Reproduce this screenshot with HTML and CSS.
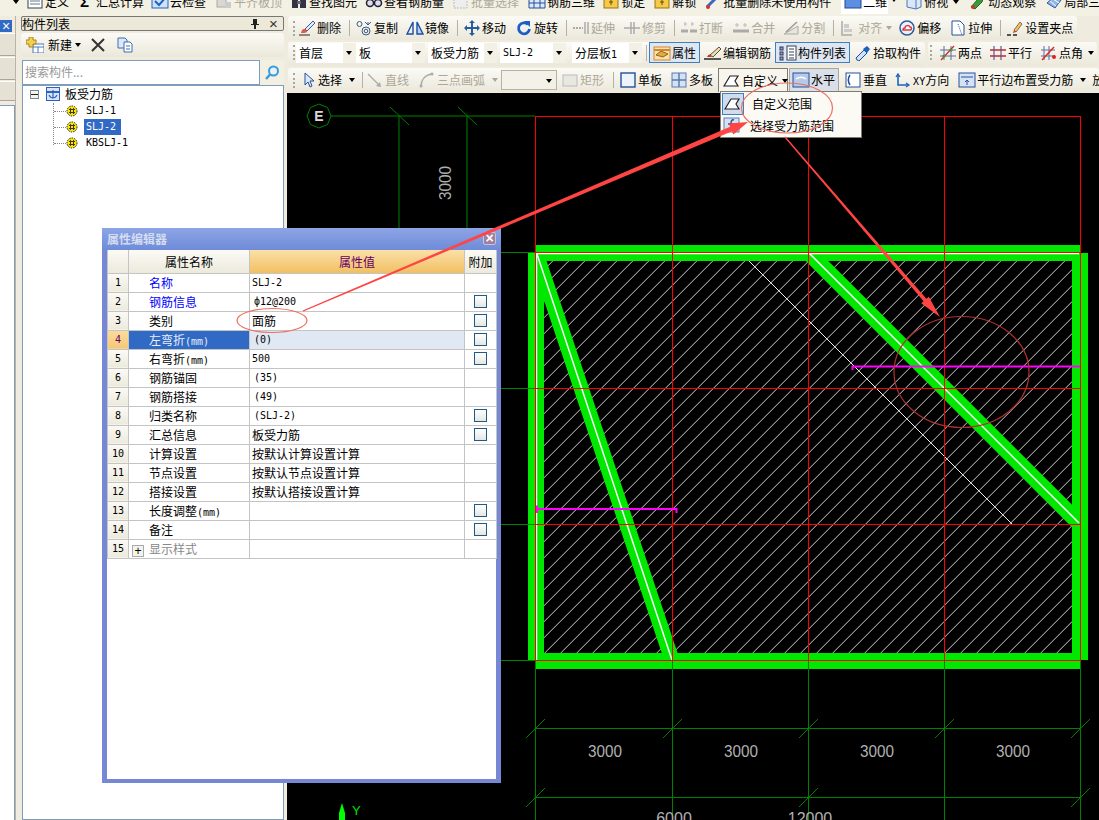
FILE: index.html
```html
<!DOCTYPE html>
<html lang="zh">
<head>
<meta charset="utf-8">
<title>属性编辑器</title>
<link rel="stylesheet" href="styles.css">
</head>
<body>
<svg class="sprite" aria-hidden="true">
  <symbol id="i-def" viewBox="0 0 18 16"><rect x="2" y="1" width="14" height="13" fill="#fff" stroke="#345"/><rect x="2" y="1" width="14" height="3" fill="#4a78c8"/><path d="M4 7h10M4 10h10" stroke="#678"/></symbol>
  <symbol id="i-cloud" viewBox="0 0 18 16"><rect x="1" y="3" width="16" height="11" fill="#cfe2fa" stroke="#1d62c0"/><path d="M4 7l4 4 7-8" fill="none" stroke="#1d62c0" stroke-width="2"/></symbol>
  <symbol id="i-flat" viewBox="0 0 18 16"><rect x="2" y="3" width="9" height="10" fill="#d8d8d0" stroke="#aaa"/><rect x="10" y="8" width="6" height="6" fill="#ccc"/></symbol>
  <symbol id="i-find" viewBox="0 0 18 16"><rect x="2" y="6" width="6" height="8" fill="#334" /><rect x="10" y="6" width="6" height="8" fill="#334"/><rect x="7" y="7" width="4" height="3" fill="#667"/></symbol>
  <symbol id="i-glass" viewBox="0 0 18 16"><circle cx="5" cy="9" r="3.5" fill="#dde" stroke="#223" stroke-width="1.5"/><circle cx="13" cy="9" r="3.5" fill="#dde" stroke="#223" stroke-width="1.5"/></symbol>
  <symbol id="i-batch" viewBox="0 0 18 16"><rect x="2" y="2" width="13" height="12" fill="#eee" stroke="#bbb" stroke-dasharray="2 1"/></symbol>
  <symbol id="i-3d" viewBox="0 0 18 16"><path d="M1 4h16v10H1zM6 4v10M12 4v10M1 9h16" fill="#dfe8f8" stroke="#24509c"/></symbol>
  <symbol id="i-lock" viewBox="0 0 18 16"><rect x="2" y="3" width="14" height="11" fill="#f5c94a" stroke="#9a7414"/><path d="M9 6v5M7 8h4" stroke="#6a4a00"/></symbol>
  <symbol id="i-wand" viewBox="0 0 18 16"><path d="M3 13 13 3" stroke="#3c68c0" stroke-width="3"/><circle cx="4" cy="13" r="2" fill="#c33"/><circle cx="14" cy="2" r="1.5" fill="#eb5"/></symbol>
  <symbol id="i-plane" viewBox="0 0 18 16"><rect x="1" y="2" width="16" height="12" fill="#5d8fe0" stroke="#1d4a96"/></symbol>
  <symbol id="i-top" viewBox="0 0 18 16"><path d="M2 5 11 2l5 3v8l-5 2-9-2z" fill="#dbe7f7" stroke="#4a78b8"/><path d="M11 2v13" stroke="#4a78b8"/></symbol>
  <symbol id="i-orbit" viewBox="0 0 18 16"><path d="M2 13 9 5l6-3-2 6-7 7z" fill="#3c9a3c" stroke="#1f6a1f"/><circle cx="4" cy="13" r="2" fill="#c33"/></symbol>
  <symbol id="i-part" viewBox="0 0 18 16"><path d="M2 9 9 3l7 3-6 8z" fill="#8fb4e8" stroke="#2f5a9c"/><path d="M5 7l6 5M8 5l6 4" stroke="#fff"/></symbol>
  <symbol id="i-del" viewBox="0 0 18 16"><path d="M1 15h11" stroke="#222"/><path d="M7 9 15 1l2 2-8 8z" fill="#e4ebf8" stroke="#3c5a98"/><path d="M3 13c1-4 2-4 4-4l2 2c0 2-3 2-6 2z" fill="#e05a3c"/></symbol>
  <symbol id="i-copy" viewBox="0 0 18 16"><circle cx="4.500" cy="4" r="2.500" fill="none" stroke="#3c5a88"/><circle cx="11" cy="11" r="4" fill="none" stroke="#3c5a88"/><circle cx="11" cy="11" r="1.800" fill="none" stroke="#3c5a88"/><path d="M10 2l3 3 3-3M13 5V2" fill="none" stroke="#3c5a88"/></symbol>
  <symbol id="i-mirror" viewBox="0 0 18 16"><path d="M1 14 7 2v12z" fill="none" stroke="#1a4fa0" stroke-width="1.400"/><path d="M17 14 11 2v12z" fill="#bcd2f2" stroke="#1a4fa0" stroke-width="1.400"/></symbol>
  <symbol id="i-move" viewBox="0 0 18 16"><path d="M9 0l3 3h-2v4h4V5l3 3-3 3V9h-4v4h2l-3 3-3-3h2V9H4v2L1 8l3-3v2h4V3H6z" fill="#2a5c9c"/></symbol>
  <symbol id="i-rotate" viewBox="0 0 18 16"><path d="M13 4.500A5.500 5.500 0 1 0 14.500 9" fill="none" stroke="#1c5ec8" stroke-width="2.800"/><path d="M9 1h6v6z" fill="#1c5ec8"/></symbol>
  <symbol id="i-extend" viewBox="0 0 18 16"><path d="M1 8h10" stroke="#aaa" stroke-dasharray="2 1" stroke-width="2"/><path d="M13 2v12M16 2v12" stroke="#aaa" stroke-width="1.500"/></symbol>
  <symbol id="i-trim" viewBox="0 0 18 16"><path d="M1 8h16" stroke="#bbb" stroke-width="2"/><path d="M8 2v12M11 2v12" stroke="#aaa" stroke-width="1.500"/></symbol>
  <symbol id="i-break" viewBox="0 0 18 16"><path d="M1 11h7M10 11h7" stroke="#aaa" stroke-width="3"/><path d="M4 4h3M11 4h3M5 2v4M12 2v4" stroke="#bbb"/></symbol>
  <symbol id="i-merge" viewBox="0 0 18 16"><path d="M1 11h16" stroke="#aaa" stroke-width="3"/><path d="M3 5h4M11 5h4M5 3v4M13 3v4" stroke="#bbb"/></symbol>
  <symbol id="i-split" viewBox="0 0 18 16"><path d="M2 14h14V6z" fill="#e6e6de" stroke="#aaa"/><path d="M4 12 15 2" stroke="#999" stroke-width="1.500"/></symbol>
  <symbol id="i-align" viewBox="0 0 18 16"><path d="M3 1v14h10" fill="none" stroke="#aaa" stroke-width="1.500"/><rect x="5" y="4" width="5" height="4" fill="#ccc"/><rect x="5" y="9" width="8" height="3" fill="#ccc"/></symbol>
  <symbol id="i-offset" viewBox="0 0 18 16"><circle cx="9" cy="8" r="7" fill="#eef" stroke="#2a5c9c" stroke-width="1.500"/><path d="M5 10c0-2 1-2 2-2 0-3 4-3 5-1 2 0 2 3 0 3z" fill="#fff" stroke="#d43c3c" stroke-width="1.500"/></symbol>
  <symbol id="i-stretch" viewBox="0 0 18 16"><path d="M3 1h8l4 4v10H3z" fill="#fff" stroke="#24509c"/><path d="M9 4l4 11" stroke="#24509c" stroke-dasharray="1 1"/></symbol>
  <symbol id="i-grip" viewBox="0 0 18 16"><path d="M8 10 14 2l2 2-6 8z" fill="#f0c84a" stroke="#866"/><path d="M8 10l-1 3 3-1" fill="#d33"/><path d="M1 15h4M7 15h4" stroke="#222" stroke-width="1.500"/></symbol>
  <symbol id="i-prop" viewBox="0 0 18 16"><rect x="1" y="2" width="16" height="13" fill="#fbe2ac" stroke="#d8862c"/><path d="M3 10l5-4 7 3-5 3z" fill="#e8a83c" stroke="#8a6a20"/><path d="M1 5h16" stroke="#d8862c" stroke-width="2"/></symbol>
  <symbol id="i-edit" viewBox="0 0 18 16"><path d="M6 10 15 2l2 2-8 8z" fill="#f2d9a6" stroke="#554"/><path d="M0 14h17" stroke="#222" stroke-width="1.500"/><path d="M3 12c1-2 2-3 3-2l2 2z" fill="#c33"/></symbol>
  <symbol id="i-list" viewBox="0 0 18 16"><rect x="1" y="2" width="3" height="3" fill="#8fa8d0" stroke="#335"/><rect x="1" y="7" width="3" height="3" fill="#8fa8d0" stroke="#335"/><rect x="1" y="12" width="3" height="3" fill="#8fa8d0" stroke="#335"/><rect x="8" y="1" width="9" height="14" fill="#fff" stroke="#345"/><path d="M10 4h5M10 7h5M10 10h5M10 13h5" stroke="#345"/></symbol>
  <symbol id="i-pick" viewBox="0 0 18 16"><path d="M3 15l-1-2 8-8 3 3-8 8z" fill="#cfe2fa" stroke="#1d4a96"/><path d="M9 4l4-3 3 3-3 4z" fill="#1d62c0"/></symbol>
  <symbol id="i-two" viewBox="0 0 18 16"><path d="M5 1v14M12 1v14M1 5h16M1 11h16" stroke="#5a6ea0"/><path d="M2 15 15 1" stroke="#e02020" stroke-width="1.300"/><circle cx="5" cy="11" r="1.600" fill="#3a9a3a"/><circle cx="12" cy="5" r="1.600" fill="#3a9a3a"/></symbol>
  <symbol id="i-para" viewBox="0 0 18 16"><path d="M5 1v14M12 1v14" stroke="#5a6ea0" stroke-width="1.300"/><path d="M1 5h16M1 11h16" stroke="#c02838" stroke-width="1.300"/></symbol>
  <symbol id="i-angle" viewBox="0 0 18 16"><path d="M4 1v14M9 1v14M1 5h14M1 11h14" stroke="#5a6ea0"/><path d="M2 15 14 2" stroke="#e02020" stroke-width="1.300"/><circle cx="14" cy="12" r="2" fill="#e02020"/></symbol>
  <symbol id="i-arrow" viewBox="0 0 18 16"><path d="M6 1v12l3-3 2 5 2-1-2-5h4z" fill="#dfe8f8" stroke="#24509c"/></symbol>
  <symbol id="i-line" viewBox="0 0 18 16"><path d="M2 2 14 14" stroke="#aaa" stroke-width="1.300"/><path d="M15 15l-5-1 4-4z" fill="#aaa"/></symbol>
  <symbol id="i-arc" viewBox="0 0 18 16"><path d="M3 15C3 8 7 3 14 2" fill="none" stroke="#aaa" stroke-width="1.500"/><circle cx="3" cy="14" r="1.500" fill="#aaa"/><circle cx="14" cy="2" r="1.500" fill="#aaa"/></symbol>
  <symbol id="i-rect" viewBox="0 0 18 16"><rect x="2" y="3" width="14" height="11" fill="#e8e8e0" stroke="#bbb"/></symbol>
  <symbol id="i-single" viewBox="0 0 18 16"><rect x="2" y="1" width="14" height="14" fill="#eef3fb" stroke="#24509c" stroke-width="1.400"/></symbol>
  <symbol id="i-multi" viewBox="0 0 18 16"><rect x="2" y="1" width="14" height="14" fill="#d6e2f4" stroke="#5a7cb0"/><path d="M9 1v14M2 8h14" stroke="#5a7cb0" stroke-width="1.500"/></symbol>
  <symbol id="i-custom" viewBox="0 0 18 16"><path d="M2 13 8 3h8l-3 5 3 5z" fill="#fff" stroke="#222" stroke-width="1.200"/></symbol>
  <symbol id="i-horiz" viewBox="0 0 18 16"><rect x="1" y="1" width="16" height="14" fill="#b5c9e8" stroke="#24509c"/><path d="M4 7c3-2 7-2 10 0" fill="none" stroke="#fff" stroke-width="1.500"/></symbol>
  <symbol id="i-vert" viewBox="0 0 18 16"><rect x="2" y="1" width="14" height="14" fill="#fff" stroke="#24509c"/><path d="M6 3c-2 3-2 7 0 10" fill="none" stroke="#24509c" stroke-width="1.500"/></symbol>
  <symbol id="i-xy" viewBox="0 0 18 16"><path d="M4 3v10h10" fill="none" stroke="#1d62c0" stroke-width="1.600"/><path d="M2 5l2-3 2 3M12 11l3 2-3 2" fill="none" stroke="#1d62c0" stroke-width="1.300"/></symbol>
  <symbol id="i-edge" viewBox="0 0 18 16"><rect x="1" y="1" width="16" height="14" fill="#d6e2f4" stroke="#24509c"/><path d="M3 5h12M9 8v5M7 10l2-2 2 2" fill="none" stroke="#24509c"/></symbol>
  <symbol id="i-new" viewBox="0 0 18 16"><rect x="7" y="7" width="11" height="9" fill="#fff" stroke="#4a78b8"/><path d="M7 10h11M12 10v6" stroke="#4a78b8"/><path d="M3 0h4v3h3v4H7v3H3V7H0V3h3z" fill="#f5d04a" stroke="#a8842a"/></symbol>
  <symbol id="i-cross" viewBox="0 0 18 16"><path d="M3 2 15 14M15 2 3 14" stroke="#333" stroke-width="2"/></symbol>
  <symbol id="i-dup" viewBox="0 0 18 16"><path d="M2 1h7l2 2v8H2z" fill="#dfe8f8" stroke="#3c6cb0"/><path d="M8 5h6l2 2v8H8z" fill="#fff" stroke="#3c6cb0"/><path d="M10 9h4M10 12h4" stroke="#3c6cb0"/></symbol>
  <symbol id="i-root" viewBox="0 0 14 14"><rect x=".5" y=".5" width="13" height="13" fill="#d6e6fa" stroke="#2e62b8"/><path d="M1 5h12" stroke="#2e62b8" stroke-width="2"/><path d="M3 8c2 4 6 4 8 0M7 3v8" fill="none" stroke="#2e62b8" stroke-width="1.200"/></symbol>
  <symbol id="i-gear" viewBox="0 0 12 12"><circle cx="6" cy="6" r="5" fill="#ffe600" stroke="#222" stroke-dasharray="1.500 1"/><path d="M3 4.500h6M3 7.500h6M4.500 3v6M7.500 3v6" stroke="#3a3a10"/></symbol>
  <symbol id="i-search" viewBox="0 0 16 16"><circle cx="9.500" cy="6" r="4.500" fill="#e6f3fd" stroke="#3b9ad8" stroke-width="2"/><path d="M6 9.500 2 14" stroke="#3b9ad8" stroke-width="2.500"/></symbol>
  <symbol id="i-pin" viewBox="0 0 12 12"><path d="M4 1h4v5h2v1H7v4H5V7H2V6h2z" fill="#222"/></symbol>
  <symbol id="i-f" viewBox="0 0 18 16"><rect x="1" y="1" width="15" height="14" fill="#d6e2f4" stroke="#5a7cb0"/><path d="M11 3c-3-1-3 2-3 5s0 5-3 4M5 7h6" fill="none" stroke="#24509c" stroke-width="1.400"/></symbol>
</svg>

<div class="app">
  <div class="topbar">
    <div class="topbar-inner">
      <i class="caret m13"></i>
      <span class="tool m7"><svg class="ico"><use href="#i-def"/></svg><span>定义</span></span>
      <span class="tool m8"><span class="sigma">Σ</span><span>汇总计算</span></span>
      <span class="tool m7"><svg class="ico"><use href="#i-cloud"/></svg><span>云检查</span></span>
      <span class="tool off m9"><svg class="ico"><use href="#i-flat"/></svg><span>平齐板顶</span></span>
      <span class="tool m8"><svg class="ico"><use href="#i-find"/></svg><span>查找图元</span></span>
      <span class="tool m8"><svg class="ico"><use href="#i-glass"/></svg><span>查看钢筋量</span></span>
      <span class="tool off m8"><svg class="ico"><use href="#i-batch"/></svg><span>批量选择</span></span>
      <span class="tool m9"><svg class="ico"><use href="#i-3d"/></svg><span>钢筋三维</span></span>
      <span class="tool m7"><svg class="ico"><use href="#i-lock"/></svg><span>锁定</span></span>
      <span class="tool m8"><svg class="ico"><use href="#i-lock"/></svg><span>解锁</span></span>
      <span class="tool m8"><svg class="ico"><use href="#i-wand"/></svg><span>批量删除未使用构件</span></span>
      <span class="combo combo-view m10"><svg class="ico"><use href="#i-plane"/></svg><span>二维</span><i class="combo-arrow"></i></span>
      <span class="tool m4"><svg class="ico"><use href="#i-top"/></svg><span>俯视</span></span>
      <i class="caret m5"></i>
      <span class="tool m10"><svg class="ico"><use href="#i-orbit"/></svg><span>动态观察</span></span>
      <span class="tool m9"><svg class="ico"><use href="#i-part"/></svg><span>局部三维</span></span>
    </div>
  </div>

  <div class="main">
    <aside class="rail">
      <div class="rail-head"><span class="rail-x">×</span></div>
      <div class="rail-tab"></div>
      <div class="rail-tab"></div>
      <div class="rail-tab short"></div>
      <div class="rail-list"></div>
    </aside>

    <section class="panel">
      <header class="panel-title">
        <span class="panel-name">构件列表</span>
        <svg class="pin"><use href="#i-pin"/></svg>
        <span class="panel-close">×</span>
      </header>
      <div class="panel-tools">
        <span class="tool"><svg class="ico"><use href="#i-new"/></svg><span class="new-label">新建</span></span>
        <i class="caret m3"></i>
        <svg class="ico m8"><use href="#i-cross"/></svg>
        <svg class="ico m8"><use href="#i-dup"/></svg>
      </div>
      <div class="search">
        <div class="search-box">搜索构件...</div>
        <div class="search-btn"><svg class="search-ico"><use href="#i-search"/></svg></div>
      </div>
      <div class="tree">
        <div class="tree-root">
          <i class="tree-box"></i>
          <svg class="tree-ico"><use href="#i-root"/></svg>
          <span>板受力筋</span>
        </div>
        <ul class="tree-kids">
          <li class="tree-kid"><i class="stub"></i><svg class="gear"><use href="#i-gear"/></svg><span class="mono tree-label">SLJ-1</span></li>
          <li class="tree-kid"><i class="stub"></i><svg class="gear"><use href="#i-gear"/></svg><span class="mono tree-label sel">SLJ-2</span></li>
          <li class="tree-kid"><i class="stub"></i><svg class="gear"><use href="#i-gear"/></svg><span class="mono tree-label">KBSLJ-1</span></li>
        </ul>
      </div>
    </section>

    <section class="work">
      <div class="row r1">
        <div class="chunk">
          <i class="grip"></i>
          <span class="tool m3"><svg class="ico"><use href="#i-del"/></svg><span>删除</span></span>
          <i class="sep m8"></i>
          <span class="tool m5"><svg class="ico"><use href="#i-copy"/></svg><span>复制</span></span>
          <span class="tool m8"><svg class="ico"><use href="#i-mirror"/></svg><span>镜像</span></span>
          <i class="sep m8"></i>
          <span class="tool m5"><svg class="ico"><use href="#i-move"/></svg><span>移动</span></span>
          <span class="tool m9"><svg class="ico"><use href="#i-rotate"/></svg><span>旋转</span></span>
          <i class="sep m8"></i>
          <span class="tool off m5"><svg class="ico"><use href="#i-extend"/></svg><span>延伸</span></span>
          <span class="tool off m8"><svg class="ico"><use href="#i-trim"/></svg><span>修剪</span></span>
          <i class="sep m8"></i>
          <span class="tool off m5"><svg class="ico"><use href="#i-break"/></svg><span>打断</span></span>
          <span class="tool off m9"><svg class="ico"><use href="#i-merge"/></svg><span>合并</span></span>
          <span class="tool off m7"><svg class="ico"><use href="#i-split"/></svg><span>分割</span></span>
          <i class="sep m8"></i>
          <span class="tool off m5"><svg class="ico"><use href="#i-align"/></svg><span>对齐</span></span>
          <i class="caret off-caret m4"></i>
          <span class="tool m6"><svg class="ico"><use href="#i-offset"/></svg><span>偏移</span></span>
          <span class="tool m8"><svg class="ico"><use href="#i-stretch"/></svg><span>拉伸</span></span>
          <i class="sep m8"></i>
          <span class="tool m5"><svg class="ico"><use href="#i-grip"/></svg><span>设置夹点</span></span>
        </div>
      </div>

      <div class="row r2">
        <div class="chunk">
          <i class="grip"></i>
          <span class="combo c-floor m1"><span>首层</span><i class="combo-arrow"></i></span>
          <span class="combo c-wide"><span>板</span><i class="combo-arrow"></i></span>
          <span class="combo c-wide m3"><span>板受力筋</span><i class="combo-arrow"></i></span>
          <span class="combo c-name m3"><span class="mono">SLJ-2</span><i class="combo-arrow"></i></span>
          <span class="combo c-layer m6"><span>分层板<span class="mono">1</span></span><i class="combo-arrow"></i></span>
          <i class="sep m4"></i>
          <span class="tool btn-on b-prop m2"><svg class="ico"><use href="#i-prop"/></svg><span>属性</span></span>
          <span class="tool m4"><svg class="ico"><use href="#i-edit"/></svg><span>编辑钢筋</span></span>
          <span class="tool btn-on b-list m4"><svg class="ico"><use href="#i-list"/></svg><span>构件列表</span></span>
          <span class="tool m4"><svg class="ico"><use href="#i-pick"/></svg><span>拾取构件</span></span>
        </div>
        <div class="chunk chunk-second">
          <i class="grip"></i>
          <span class="tool m7"><svg class="ico"><use href="#i-two"/></svg><span>两点</span></span>
          <span class="tool m7"><svg class="ico"><use href="#i-para"/></svg><span>平行</span></span>
          <span class="tool m8"><svg class="ico"><use href="#i-angle"/></svg><span>点角</span></span>
          <i class="caret m5"></i>
        </div>
      </div>

      <div class="row r3">
        <div class="chunk chunk-fill">
          <i class="grip"></i>
          <span class="tool m4"><svg class="ico"><use href="#i-arrow"/></svg><span>选择</span></span>
          <i class="caret m7"></i>
          <i class="sep m7"></i>
          <span class="tool off m3"><svg class="ico"><use href="#i-line"/></svg><span>直线</span></span>
          <span class="tool off m9"><svg class="ico"><use href="#i-arc"/></svg><span>三点画弧</span></span>
          <i class="caret off-caret m7"></i>
          <span class="combo c-off m3"><span></span><i class="combo-arrow"></i></span>
          <span class="tool off m4"><svg class="ico"><use href="#i-rect"/></svg><span>矩形</span></span>
          <i class="sep m9"></i>
          <span class="tool m5"><svg class="ico"><use href="#i-single"/></svg><span>单板</span></span>
          <span class="tool m8"><svg class="ico"><use href="#i-multi"/></svg><span>多板</span></span>
          <span class="tool b-custom m5"><svg class="ico"><use href="#i-custom"/></svg><span>自定义</span><i class="caret m4"></i></span>
          <span class="tool b-horiz m1"><svg class="ico"><use href="#i-horiz"/></svg><span>水平</span></span>
          <span class="tool m5"><svg class="ico"><use href="#i-vert"/></svg><span>垂直</span></span>
          <span class="tool m7"><svg class="ico"><use href="#i-xy"/></svg><span><span class="mono">XY</span>方向</span></span>
          <span class="tool m9"><svg class="ico"><use href="#i-edge"/></svg><span>平行边布置受力筋</span></span>
          <i class="caret m7"></i>
          <span class="tool m6"><span>放射筋</span></span>
        </div>
      </div>

      <div class="canvas">
        <svg class="drawing" viewBox="287 93 812 727">
          <defs>
            <pattern id="hatch" patternUnits="userSpaceOnUse" width="16" height="16" patternTransform="translate(13.7 0)">
              <path d="M-2 2 2 -2M0 16 16 0M14 18 18 14" class="hatch-line"/>
            </pattern>
            <clipPath id="inner"><rect x="536" y="253" width="544" height="407"/></clipPath>
          </defs>

          <rect x="544" y="261" width="528" height="392" fill="url(#hatch)"/>
          <path class="fine-white" d="M749 261 1012 524"/>

          <g class="green-band">
            <rect x="536" y="245" width="544" height="16"/>
            <rect x="528" y="253" width="16" height="407"/>
            <rect x="1072" y="253" width="16" height="407"/>
            <rect x="536" y="653" width="544" height="16"/>
            <g clip-path="url(#inner)">
              <path class="diag" d="M526 223 682 690"/>
              <path class="diag diag-wide" d="M788 232 1100 544"/>
            </g>
          </g>
          <path class="white-line" d="M536.500 661V253.500H1079"/>
          <path class="white-line" d="M537 254 672 660"/>
          <path class="white-line" d="M809 253 1079 523"/>

          <g class="axis">
            <path d="M331 116H535M399 116V252M467 116V252"/>
            <path d="M287 252.500H535M501 388.500H535M501 524.500H535M501 660.500H535"/>
            <path d="M535.500 660V820M672.500 660V820M808.500 660V820M944.500 660V820M1080.500 660V820"/>
            <path d="M535 728.500H1081M535 797.500H1081"/>
            <path d="M390 107 409 125M458 107 477 125"/>
            <path d="M526 738 545 719M663 738 682 719M799 738 818 719M935 738 954 719M1071 738 1090 719"/>
            <path d="M526 807 545 788M799 807 818 788M1071 807 1090 788"/>
            <path d="M319 104 327.500 107.500 331 116 327.500 124.500 319 128 310.500 124.500 307 116 310.500 107.500Z" fill="none"/>
          </g>

          <g class="red-grid">
            <path d="M535.500 116V660M672.500 116V660M808.500 116V660M944.500 116V660M1080.500 116V660"/>
            <path d="M535 116.500H1081M535 252.500H1081M535 388.500H1081M535 524.500H1081M535 660.500H1081"/>
          </g>

          <g class="magenta">
            <path d="M537 509H676.500V513M537 505.500V513M852.500 370V366.500H1080"/>
          </g>

          <text class="dim" x="605" y="757" textLength="34" lengthAdjust="spacingAndGlyphs">3000</text>
          <text class="dim" x="741" y="757" textLength="34" lengthAdjust="spacingAndGlyphs">3000</text>
          <text class="dim" x="877" y="757" textLength="34" lengthAdjust="spacingAndGlyphs">3000</text>
          <text class="dim" x="1013" y="757" textLength="34" lengthAdjust="spacingAndGlyphs">3000</text>
          <text class="dim" x="674" y="824">6000</text>
          <text class="dim" x="810" y="824">12000</text>
          <text class="dim" transform="rotate(-90 451 183)" x="451" y="183" textLength="34" lengthAdjust="spacingAndGlyphs">3000</text>
          <text class="bubble" x="319" y="121">E</text>

          <path class="y-arrow" d="M342 803 345 813V820H339V813Z"/>
          <text class="y-label" x="352" y="815">Y</text>
        </svg>
      </div>
    </section>
  </div>

  <div class="menu">
    <div class="menu-item">
      <span class="menu-ico on"><svg class="ico"><use href="#i-custom"/></svg></span>
      <span class="menu-a">自定义范围</span>
    </div>
    <div class="menu-item">
      <span class="menu-ico"><svg class="ico"><use href="#i-f"/></svg></span>
      <span class="menu-b">选择受力筋范围</span>
    </div>
  </div>

  <div class="dialog">
    <div class="dialog-title">
      <span>属性编辑器</span>
      <span class="dialog-close">×</span>
    </div>
    <div class="dialog-body">
      <table class="grid">
        <colgroup><col class="c-n"><col class="c-a"><col class="c-v"><col class="c-x"></colgroup>
        <thead>
          <tr><th class="th"></th><th class="th">属性名称</th><th class="th th-val">属性值</th><th class="th">附加</th></tr>
        </thead>
        <tbody>
          <tr><td class="num">1</td><td class="name link">名称</td><td class="val mono">SLJ-2</td><td></td></tr>
          <tr><td class="num">2</td><td class="name link">钢筋信息</td><td class="val mono pad">ф12@200</td><td><i class="cb"></i></td></tr>
          <tr><td class="num">3</td><td class="name">类别</td><td class="val">面筋</td><td><i class="cb"></i></td></tr>
          <tr class="cur"><td class="num">4</td><td class="name">左弯折<span class="mono">(mm)</span></td><td class="val mono pad">(0)</td><td><i class="cb"></i></td></tr>
          <tr><td class="num">5</td><td class="name">右弯折<span class="mono">(mm)</span></td><td class="val mono">500</td><td><i class="cb"></i></td></tr>
          <tr><td class="num">6</td><td class="name">钢筋锚固</td><td class="val mono pad">(35)</td><td></td></tr>
          <tr><td class="num">7</td><td class="name">钢筋搭接</td><td class="val mono pad">(49)</td><td></td></tr>
          <tr><td class="num">8</td><td class="name">归类名称</td><td class="val mono pad">(SLJ-2)</td><td><i class="cb"></i></td></tr>
          <tr><td class="num">9</td><td class="name">汇总信息</td><td class="val">板受力筋</td><td><i class="cb"></i></td></tr>
          <tr><td class="num">10</td><td class="name">计算设置</td><td class="val">按默认计算设置计算</td><td></td></tr>
          <tr><td class="num">11</td><td class="name">节点设置</td><td class="val">按默认节点设置计算</td><td></td></tr>
          <tr><td class="num">12</td><td class="name">搭接设置</td><td class="val">按默认搭接设置计算</td><td></td></tr>
          <tr><td class="num">13</td><td class="name">长度调整<span class="mono">(mm)</span></td><td class="val"></td><td><i class="cb"></i></td></tr>
          <tr><td class="num">14</td><td class="name">备注</td><td class="val"></td><td><i class="cb"></i></td></tr>
          <tr><td class="num">15</td><td class="name group"><i class="plus">+</i><span>显示样式</span></td><td class="val"></td><td></td></tr>
        </tbody>
      </table>
    </div>
  </div>

  <svg class="marks" viewBox="0 0 1099 820">
    <path class="mark-fill" d="M303.300 311.600 732 131.300 733.300 134.500 748 122 728.700 123.500 730 126.700 302.700 310.400Z"/>
    <path class="mark-fill" d="M785.500 136.600 926.400 298.800 928.800 296.700 940 317 921.200 303.300 923.600 301.200 784.500 137.400Z"/>
    <ellipse class="mark-soft" cx="272" cy="320.500" rx="35" ry="12"/>
    <ellipse class="mark-soft" cx="787" cy="108" rx="45.500" ry="25"/>
    <ellipse class="mark-dark" cx="961.500" cy="372" rx="67.500" ry="55.500"/>
  </svg>
</div>
</body>
</html>
```

FILE: styles.css
```css
* { box-sizing: border-box; }

html, body {
  margin: 0;
  height: 100%;
  overflow: hidden;
}

body {
  background: #efecdf;
  color: #000;
  font: 12px/16px "Noto Sans CJK SC", "Liberation Sans", sans-serif;
}

ul { margin: 0; padding: 0; list-style: none; }
i { font-style: normal; }

.sprite { display: none; }
.mono { font-family: "DejaVu Sans Mono", "Noto Sans CJK SC", monospace; font-size: 10px; line-height: 1; }

.app {
  position: relative;
  width: 1099px;
  height: 820px;
  overflow: hidden;
  display: flex;
  flex-direction: column;
}

/* spacing helpers */
.m1 { margin-left: 1px; } .m2 { margin-left: 2px; } .m3 { margin-left: 3px; }
.m4 { margin-left: 4px; } .m5 { margin-left: 5px; } .m6 { margin-left: 6px; }
.m7 { margin-left: 7px; } .m8 { margin-left: 8px; } .m9 { margin-left: 9px; }
.m10 { margin-left: 10px; } .m13 { margin-left: 13px; }

/* shared toolbar bits */
.tool { display: flex; align-items: center; flex: none; white-space: nowrap; }
.tool.off { color: #aca899; }
.ico { width: 18px; height: 16px; flex: none; margin-right: 1px; }
.caret {
  flex: none;
  width: 0;
  height: 0;
  border-left: 3.5px solid transparent;
  border-right: 3.5px solid transparent;
  border-top: 4px solid #000;
}
.off-caret { border-top-color: #aca899; }
.sep { flex: none; width: 1px; height: 16px; background: #b4b1a4; }
.grip {
  flex: none;
  width: 2px;
  height: 15px;
  border-left: 2px dotted #a9a69a;
}
.combo {
  flex: none;
  display: flex;
  align-items: center;
  height: 20px;
  padding-left: 3px;
  background: #fff;
  white-space: nowrap;
}
.combo > span { flex: 1; }
.combo-arrow {
  flex: none;
  width: 13px;
  height: 20px;
  background: #f3f1e6;
  position: relative;
}
.combo-arrow::after {
  content: "";
  position: absolute;
  left: 3px;
  top: 8px;
  border-left: 3.5px solid transparent;
  border-right: 3.5px solid transparent;
  border-top: 4px solid #000;
}

/* top strip */
.topbar { flex: none; height: 16px; overflow: hidden; background: #f3f0e4; }
.topbar-inner { display: flex; align-items: center; height: 24px; margin-top: -10px; }
.topbar-inner .combo { height: 24px; padding-left: 3px; width: 60px; }
.topbar-inner .combo-arrow { height: 24px; }
.sigma { width: 19px; font: 700 15px/16px "Liberation Sans", sans-serif; padding-left: 3px; }

/* layout */
.main { flex: 1; display: flex; min-height: 0; }

.rail {
  flex: none;
  width: 16px;
  display: flex;
  flex-direction: column;
  border-right: 1px solid #b8b5a8;
}
.rail-head { margin-top: 4px; height: 12px; width: 12px; background: #316ac5; color: #fff; text-align: center; line-height: 12px; }
.rail-x { font: 14px/12px "Liberation Sans", sans-serif; }
.rail-tab { height: 23px; margin-top: 1px; background: #e5e2d5; border-top: 1px solid #fff; border-bottom: 1px solid #aaa79a; }
.rail-tab.short { height: 20px; margin-top: 1px; }
.rail-list { flex: 1; margin-top: 4px; background: #fff; border-top: 1px solid #7f9db9; border-right: 1px solid #7f9db9; }

.panel {
  flex: none;
  width: 263px;
  margin-left: 5px;
  display: flex;
  flex-direction: column;
}
.panel-title {
  flex: none;
  display: flex;
  align-items: center;
  height: 15px;
  border: 1px solid #777;
  border-radius: 2px;
  background: #ece9d8;
}
.panel-name { flex: 1; }
.pin { width: 12px; height: 12px; margin-right: 8px; }
.panel-close { width: 12px; margin-right: 2px; font: 15px/12px "Liberation Sans", sans-serif; color: #333; }
.panel-tools {
  flex: none;
  display: flex;
  align-items: center;
  height: 24px;
  margin-top: 2px;
  padding-left: 5px;
  border-radius: 3px;
  background: linear-gradient(#fbfaf5, #ebe8da);
}
.new-label { margin-left: 3px; }
.search { flex: none; display: flex; height: 25px; margin-top: 3px; }
.search-box {
  flex: 1;
  margin-left: 1px;
  padding: 3px 2px;
  border: 1px solid #7f9db9;
  background: #fff;
  color: #999;
}
.search-btn {
  flex: none;
  width: 24px;
  display: flex;
  align-items: center;
  justify-content: center;
  background: #f2efe3;
}
.search-ico { width: 16px; height: 16px; }
.tree {
  flex: 1;
  margin-left: 1px;
  border: 1px solid #7f9db9;
  background: #fff;
}
.tree-root { display: flex; align-items: center; height: 16px; margin-bottom: 1px; padding-left: 7px; }
.tree-box {
  flex: none;
  width: 9px;
  height: 9px;
  border: 1px solid #7a8a99;
  background: linear-gradient(transparent 3px, #222 3px, #222 4px, transparent 4px), #f4f3ec;
}
.tree-ico { width: 14px; height: 14px; margin-left: 7px; }
.tree-root span { margin-left: 5px; }
.tree-kids { margin-left: 30px; border-left: 1px dotted #888; height: 42px; }
.tree-kid { display: flex; align-items: center; height: 16px; }
.stub { flex: none; width: 12px; border-top: 1px dotted #888; }
.gear { width: 12px; height: 12px; flex: none; }
.tree-label { margin-left: 6px; padding: 0 2px; height: 16px; line-height: 16px; }
.tree-label.sel { background: #316ac5; color: #fff; padding-right: 5px; }

/* right side */
.work { flex: none; width: 812px; margin-left: 3px; display: flex; flex-direction: column; }
.row { flex: none; display: flex; height: 24px; }
.row.r2 { margin-top: 2px; }
.row.r3 { margin-top: 2px; margin-bottom: 1px; }
.chunk {
  flex: none;
  display: flex;
  align-items: center;
  margin-left: 1px;
  padding: 0 4px 0 5px;
  border-radius: 3px;
  background: linear-gradient(#fbfaf5, #ebe8da);
}
.r2 .chunk { padding-bottom: 3px; }
.chunk-second { margin-left: 3px; padding-left: 2px; width: 169px; }
.chunk-fill { width: 811px; overflow: hidden; }

.c-floor { width: 60px; }
.c-wide { width: 69px; }
.c-name { width: 66px; }
.c-layer { width: 70px; }
.c-off { width: 56px; background: #f4f2e8; border: 1px solid #b6b3a6; }
.c-off .combo-arrow { height: 18px; }

.btn-on { height: 21px; padding-left: 3px; border: 1px solid #3f7fc4; background: #dde6f1; }
.b-prop { width: 51px; }
.b-list { width: 75px; }
.b-custom { width: 70px; height: 24px; padding-left: 3px; background: #f7f5ee; border: 1px solid #7d7b72; border-bottom: 0; }
.b-custom .ico { margin-right: 2px; }
.b-horiz { width: 50px; height: 24px; padding-left: 2px; background: #d9dfe8; border: 1px solid #a9a69a; }

.canvas { flex: 1; min-height: 0; margin-left: 0; background: #000; }
.drawing { display: block; width: 812px; height: 727px; }

.hatch-line { stroke: #cfcfcf; stroke-width: 1; fill: none; }
.fine-white { stroke: #f4f4f4; stroke-width: 1; fill: none; }
.green-band { fill: #00e800; }
.diag { stroke: #00e800; stroke-width: 15; fill: none; }
.diag-wide { stroke-width: 16; }
.white-line { stroke: #fff; stroke-width: 1.5; fill: none; }
.axis { stroke: #008000; stroke-width: 1; fill: none; }
.red-grid { stroke: #ff0000; stroke-width: 1; fill: none; shape-rendering: crispEdges; }
.magenta { stroke: #ff00ff; stroke-width: 2; fill: none; }
.dim { fill: #b0b0b0; font: 16px "Liberation Sans", sans-serif; text-anchor: middle; }
.bubble { fill: #d8d8d8; font: 700 14px "Liberation Sans", sans-serif; text-anchor: middle; }
.y-arrow { fill: #00ff00; }
.y-label { fill: #00e000; font: 13px "Liberation Sans", sans-serif; }

/* drop-down menu, floats over the canvas */
.menu {
  position: absolute;
  left: 720px;
  top: 91px;
  width: 142px;
  height: 47px;
  padding: 1px;
  background: #fbfaf5;
  border: 1px solid #7d7b72;
}
.menu-item { display: flex; align-items: center; height: 22px; }
.menu-ico { flex: none; width: 22px; height: 22px; padding: 2px 1px; }
.menu-ico.on { background: #cfdcee; border: 1px solid #3f7fc4; padding: 2px 0; }
.menu-a { margin-left: 8px; }
.menu-b { margin-left: 6px; }

/* floating property window */
.dialog {
  position: absolute;
  left: 102px;
  top: 228px;
  width: 399px;
  height: 555px;
  display: flex;
  flex-direction: column;
  background: #7687d6;
  border-radius: 2px 2px 0 0;
}
.dialog-title {
  flex: none;
  display: flex;
  align-items: center;
  justify-content: space-between;
  height: 22px;
  padding: 0 5px;
  background: linear-gradient(#8da5e6, #6f8bd8);
  color: #d4dcf0;
  font-weight: 700;
}
.dialog-close {
  width: 13px;
  height: 13px;
  margin-top: -2px;
  border: 1px solid #c4c4dc;
  border-radius: 2px;
  background: #a17f9f;
  color: #fff;
  font: 700 14px/11px "Liberation Sans", sans-serif;
  text-align: center;
}
.dialog-body { flex: 1; margin: 0 5px 4px; background: #fff; }

.grid { width: 389px; border-collapse: collapse; table-layout: fixed; }
.c-n { width: 21px; } .c-a { width: 121px; } .c-v { width: 215px; } .c-x { width: 32px; }
.grid td, .grid th { border: 1px solid #c4c4c4; padding: 0; height: 19px; line-height: 15px; white-space: nowrap; overflow: hidden; }
.grid thead th { height: 23px; border-top: 0; font-weight: 400; }
.th { background: linear-gradient(#fbfaf5, #ece9dc); }
.th-val { background: linear-gradient(#fae0a8, #f1bf62); color: #660066; }
.grid .num { background: linear-gradient(#fbfaf5, #ece9dc); text-align: center; font: 10px/15px "DejaVu Sans Mono", monospace; }
.grid .name { padding-left: 20px; }
.link { color: #0000ff; }
.grid .val { padding-left: 2px; }
.grid .val.pad { padding-left: 4px; }
.cb {
  display: block;
  width: 13px;
  height: 13px;
  margin: 0 auto;
  border: 1px solid #1d5a8a;
  background: linear-gradient(#fff, #e6e6e0);
}
.grid .cur .num { background: linear-gradient(#fbdc9c, #f5c878); color: #660066; }
.grid .cur .name { background: #316ac5; color: #e8eefa; }
.grid .cur .val { background: #e0e8f4; }
.grid .group { padding-left: 3px; color: #888; }
.group span { margin-left: 5px; }
.plus {
  display: inline-block;
  width: 12px;
  height: 12px;
  border: 1px solid #aaa;
  background: #f4f3ec;
  color: #000;
  font: 12px/10px "Liberation Sans", sans-serif;
  text-align: center;
  vertical-align: -1px;
}

/* hand-drawn review marks over everything */
.marks { position: absolute; left: 0; top: 0; width: 1099px; height: 820px; pointer-events: none; }
.mark-fill { fill: #ff4444; }
.mark-soft { fill: none; stroke: #ee7060; stroke-width: 1.200; }
.mark-dark { fill: none; stroke: #b03030; stroke-width: 1.200; }
```
